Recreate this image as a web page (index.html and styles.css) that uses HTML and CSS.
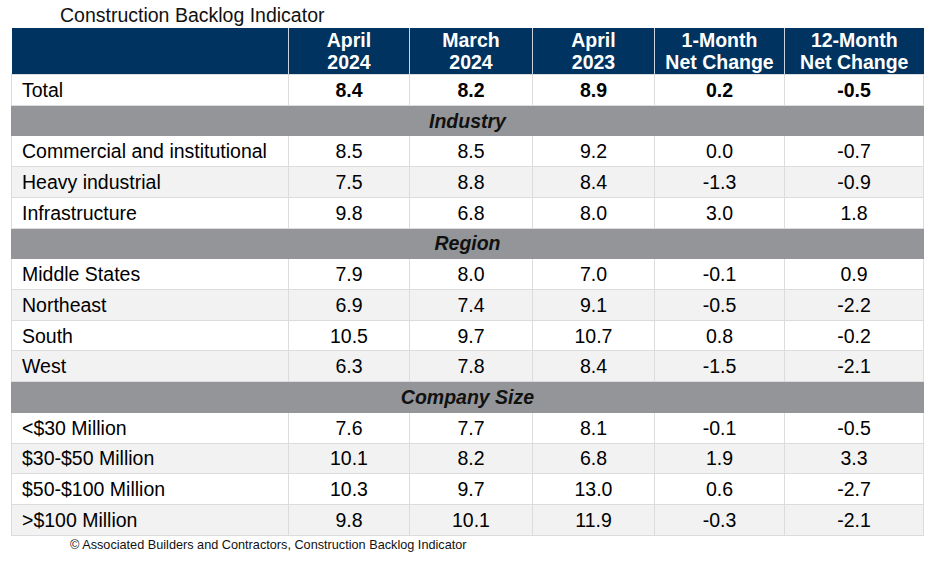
FILE: index.html
```html
<!DOCTYPE html>
<html>
<head>
<meta charset="utf-8">
<link rel="stylesheet" href="styles.css">
</head>
<body>
<div class="title">Construction Backlog Indicator</div>
<table class="cbi">
  <colgroup>
    <col class="c-label"><col class="c-a"><col class="c-b"><col class="c-c"><col class="c-d"><col class="c-e">
  </colgroup>
  <thead>
    <tr class="head">
      <th></th>
      <th>April<br>2024</th>
      <th>March<br>2024</th>
      <th>April<br>2023</th>
      <th>1-Month<br>Net Change</th>
      <th>12-Month<br>Net Change</th>
    </tr>
  </thead>
  <tbody>
    <tr class="total"><td class="lbl">Total</td><td>8.4</td><td>8.2</td><td>8.9</td><td>0.2</td><td>-0.5</td></tr>
    <tr class="section"><td colspan="6">Industry</td></tr>
    <tr><td class="lbl">Commercial and institutional</td><td>8.5</td><td>8.5</td><td>9.2</td><td>0.0</td><td>-0.7</td></tr>
    <tr class="alt"><td class="lbl">Heavy industrial</td><td>7.5</td><td>8.8</td><td>8.4</td><td>-1.3</td><td>-0.9</td></tr>
    <tr><td class="lbl">Infrastructure</td><td>9.8</td><td>6.8</td><td>8.0</td><td>3.0</td><td>1.8</td></tr>
    <tr class="section"><td colspan="6">Region</td></tr>
    <tr><td class="lbl">Middle States</td><td>7.9</td><td>8.0</td><td>7.0</td><td>-0.1</td><td>0.9</td></tr>
    <tr class="alt"><td class="lbl">Northeast</td><td>6.9</td><td>7.4</td><td>9.1</td><td>-0.5</td><td>-2.2</td></tr>
    <tr><td class="lbl">South</td><td>10.5</td><td>9.7</td><td>10.7</td><td>0.8</td><td>-0.2</td></tr>
    <tr class="alt"><td class="lbl">West</td><td>6.3</td><td>7.8</td><td>8.4</td><td>-1.5</td><td>-2.1</td></tr>
    <tr class="section"><td colspan="6">Company Size</td></tr>
    <tr><td class="lbl">&lt;$30 Million</td><td>7.6</td><td>7.7</td><td>8.1</td><td>-0.1</td><td>-0.5</td></tr>
    <tr class="alt"><td class="lbl">$30-$50 Million</td><td>10.1</td><td>8.2</td><td>6.8</td><td>1.9</td><td>3.3</td></tr>
    <tr><td class="lbl">$50-$100 Million</td><td>10.3</td><td>9.7</td><td>13.0</td><td>0.6</td><td>-2.7</td></tr>
    <tr class="alt"><td class="lbl">&gt;$100 Million</td><td>9.8</td><td>10.1</td><td>11.9</td><td>-0.3</td><td>-2.1</td></tr>
  </tbody>
</table>
<div class="source">© Associated Builders and Contractors, Construction Backlog Indicator</div>
</body>
</html>
```

FILE: styles.css
```css
html, body {
  margin: 0;
  padding: 0;
  background: #ffffff;
}
body {
  width: 936px;
  height: 562px;
  overflow: hidden;
  font-family: "Liberation Sans", Arial, sans-serif;
  color: #000;
}
.title {
  height: 28px;
  line-height: 31px;
  padding-left: 60px;
  font-size: 19.5px;
  color: #111;
}
.cbi {
  margin-left: 11px;
  width: 912px;
  table-layout: fixed;
  border-collapse: collapse;
  font-size: 19.5px;
}
.c-label { width: 277px; }
.c-a { width: 121px; }
.c-b { width: 123px; }
.c-c { width: 122px; }
.c-d { width: 130px; }
.c-e { width: 139px; }
.head th {
  background: #00335f;
  color: #fff;
  font-weight: bold;
  height: 46px;
  padding: 0;
  line-height: 22px;
  text-align: center;
  border-left: 1px solid #c9d2de;
  vertical-align: middle;
}
.head th:first-child {
  border-left: none;
}
.cbi tbody tr {
  height: 30.73px;
}
.cbi td {
  padding: 0;
  text-align: center;
  vertical-align: middle;
  border: 1px solid #dcdcdc;
  line-height: 20px;
}
.cbi td.lbl {
  text-align: left;
  padding-left: 10px;
}
.cbi tr.alt td {
  background: #f2f2f2;
}
.cbi tr.total td {
  font-weight: bold;
}
.cbi tr.total td.lbl {
  font-weight: normal;
}
.cbi tr.section td {
  background: #939598;
  font-weight: bold;
  font-style: italic;
  border-color: #939598;
  color: #111;
}
.source {
  padding-left: 70px;
  font-size: 12.7px;
  line-height: 16px;
  margin-top: 1px;
  color: #111;
}
```
